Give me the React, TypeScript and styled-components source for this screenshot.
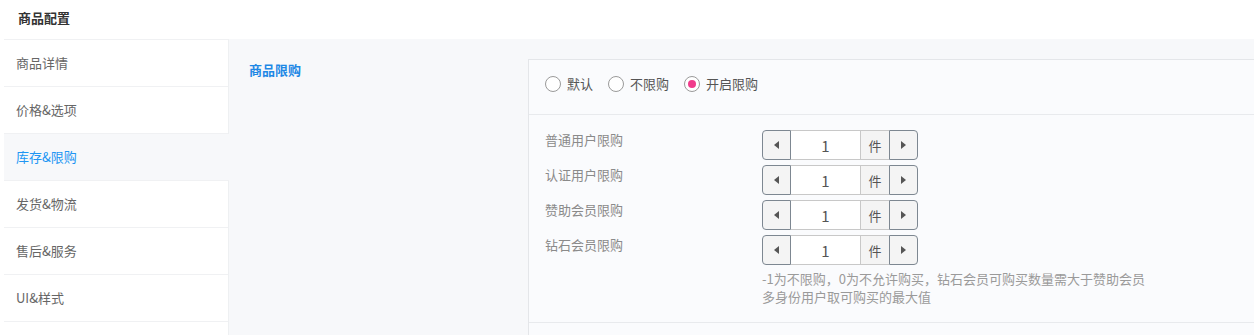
import React from 'react'
import styled, { createGlobalStyle } from 'styled-components'

const GlobalStyle = createGlobalStyle`
  html, body {
    margin: 0;
    padding: 0;
    background: #ffffff;
    font-family: "Noto Sans CJK SC", "Noto Sans", "Liberation Sans", sans-serif;
    font-size: 13px;
    color: #666;
  }
  * { box-sizing: border-box; }
`

const Page = styled.div`
  width: 1254px;
  height: 335px;
  overflow: hidden;
  background: #fff;
`

const Header = styled.div`
  height: 39px;
  padding-left: 18px;
  display: flex;
  align-items: center;
  font-size: 13px;
  font-weight: 700;
  color: #333;
  padding-bottom: 5px;
`

const Body = styled.div`
  display: flex;
  height: 296px;
`

const Sidebar = styled.ul`
  list-style: none;
  margin: 0 0 0 4px;
  padding: 0;
  width: 225px;
  border-top: 1px solid #f0f1f3;
  border-right: 1px solid #eef0f2;
  flex-shrink: 0;
`

const NavItem = styled.li<{ $active?: boolean }>`
  height: 47px;
  padding-left: 12px;
  display: flex;
  align-items: center;
  border-bottom: 1px solid #f0f1f3;
  margin-right: ${({ $active }) => ($active ? '-1px' : '0')};
  background: ${({ $active }) => ($active ? '#f7f8fa' : '#fff')};
  color: ${({ $active }) => ($active ? '#2196f3' : '#666')};
  padding-bottom: 2px;
`

const Main = styled.div`
  flex: 1;
  background: #f7f8fa;
  display: flex;
  padding: 20px 0 0 20px;
  overflow: hidden;
`

const SectionTitle = styled.div`
  width: 279px;
  flex-shrink: 0;
  padding-top: 1px;
  font-weight: 700;
  color: #1e88e5;
`

const Panel = styled.div`
  flex: 1;
  margin-right: -20px;
  background: #fafbfd;
  border: 1px solid #e4e6e9;
  border-bottom: none;
`

const RadioRow = styled.div`
  height: 55px;
  display: flex;
  align-items: center;
  padding: 0 0 7px 16px;
  gap: 15px;
  border-bottom: 1px solid #e8eaed;
`

const RadioLabel = styled.label`
  display: flex;
  align-items: center;
  gap: 6px;
  color: #555;
`

const RadioDot = styled.span<{ $checked?: boolean }>`
  width: 16px;
  height: 16px;
  border-radius: 50%;
  border: 1px solid #9a9a9a;
  background: #fff;
  display: flex;
  align-items: center;
  justify-content: center;
  &::after {
    content: '';
    width: 8px;
    height: 8px;
    border-radius: 50%;
    background: ${({ $checked }) => ($checked ? '#f03c8c' : 'transparent')};
  }
`

const Limits = styled.div`
  padding: 15px 0 16px 16px;
  border-bottom: 1px solid #e8eaed;
`

const LimitRow = styled.div`
  display: flex;
  margin-bottom: 5px;
`

const LimitLabel = styled.div`
  width: 217px;
  padding-top: 1px;
  color: #8a8a8a;
  line-height: 18px;
`

const Spinner = styled.div`
  display: flex;
  height: 30px;
`

const StepButton = styled.span<{ $side: 'left' | 'right' }>`
  width: 29px;
  display: flex;
  align-items: center;
  justify-content: center;
  background: #f4f4f4;
  border: 1px solid #7d8791;
  border-radius: ${({ $side }) => ($side === 'left' ? '4px 0 0 4px' : '0 4px 4px 0')};
`

const Arrow = styled.span<{ $dir: 'left' | 'right' }>`
  width: 0;
  height: 0;
  border-top: 4px solid transparent;
  border-bottom: 4px solid transparent;
  ${({ $dir }) =>
    $dir === 'left' ? 'border-right: 5px solid #555;' : 'border-left: 5px solid #555;'}
`

const Value = styled.span`
  width: 69px;
  display: flex;
  align-items: center;
  justify-content: center;
  background: #fff;
  border-top: 1px solid #c8c8c8;
  border-bottom: 1px solid #c8c8c8;
  font-size: 15px;
  color: #555;
`

const Unit = styled.span`
  width: 29px;
  display: flex;
  align-items: center;
  justify-content: center;
  background: #f4f4f4;
  border-top: 1px solid #c8c8c8;
  border-bottom: 1px solid #c8c8c8;
  border-left: 1px solid #c8c8c8;
  color: #555;
`

const Hint = styled.div`
  margin-left: 217px;
  color: #9a9a9a;
  line-height: 18px;
`

const navItems = ['商品详情', '价格&选项', '库存&限购', '发货&物流', '售后&服务', 'UI&样式']
const limits = ['普通用户限购', '认证用户限购', '赞助会员限购', '钻石会员限购']

export default function App() {
  return (
    <Page>
      <GlobalStyle />
      <Header>商品配置</Header>
      <Body>
        <Sidebar>
          {navItems.map((n) => (
            <NavItem key={n} $active={n === '库存&限购'}>
              {n}
            </NavItem>
          ))}
        </Sidebar>
        <Main>
          <SectionTitle>商品限购</SectionTitle>
          <Panel>
            <RadioRow>
              <RadioLabel>
                <RadioDot />
                默认
              </RadioLabel>
              <RadioLabel>
                <RadioDot />
                不限购
              </RadioLabel>
              <RadioLabel>
                <RadioDot $checked />
                开启限购
              </RadioLabel>
            </RadioRow>
            <Limits>
              {limits.map((l) => (
                <LimitRow key={l}>
                  <LimitLabel>{l}</LimitLabel>
                  <Spinner>
                    <StepButton $side="left">
                      <Arrow $dir="left" />
                    </StepButton>
                    <Value>1</Value>
                    <Unit>件</Unit>
                    <StepButton $side="right">
                      <Arrow $dir="right" />
                    </StepButton>
                  </Spinner>
                </LimitRow>
              ))}
              <Hint>
                -1为不限购，0为不允许购买，钻石会员可购买数量需大于赞助会员
                <br />
                多身份用户取可购买的最大值
              </Hint>
            </Limits>
          </Panel>
        </Main>
      </Body>
    </Page>
  )
}
